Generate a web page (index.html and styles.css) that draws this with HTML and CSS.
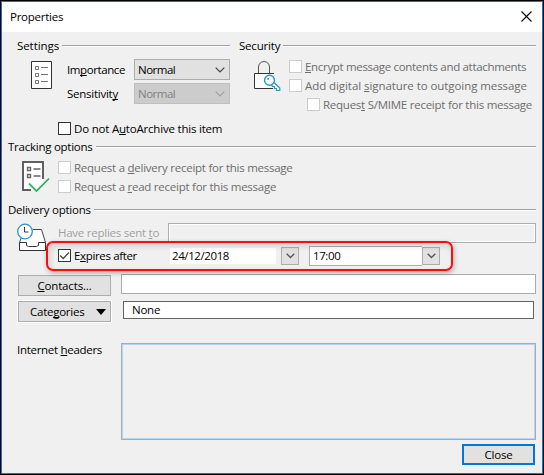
FILE: index.html
```
<!DOCTYPE html>
<html lang="en">
<head>
<meta charset="utf-8">
<title>Properties</title>
<link rel="stylesheet" href="styles.css">
</head>
<body>
<main class="dialog">
  <header class="titlebar">
    <span>Properties</span>
    <svg class="close-icon" width="11" height="11" viewBox="0 0 11 11"><path d="M.5.5l10 10M10.5.5l-10 10" fill="none" stroke="#000" stroke-width="1.1"/></svg>
  </header>

  <div class="top">
    <section class="settings">
      <h2 class="heading"><span class="t-settings">Settings</span><i class="rule"></i></h2>
      <div class="settings-body">
        <svg class="icon-list" width="21" height="28" viewBox="0 0 21 28" fill="none">
          <path d="M.5.5h20v27H.5z" fill="#fff" stroke="#333"/>
          <path d="M4.5 5.5h3v3h-3zM4.5 12.5h3v3h-3zM4.5 19.5h3v3h-3zM10 6.5h7M10 13.5h7M10 20.5h7" stroke="#737373"/>
        </svg>
        <div class="selects">
          <div class="select-row"><label class="t-importance">Im<u>p</u>ortance</label><div class="select"><span>Normal</span><svg width="10" height="6" viewBox="0 0 10 6"><path d="M.7.7L5 5 9.3.7" fill="none" stroke="#444" stroke-width="1.2"/></svg></div></div>
          <div class="select-row"><label>Sensitivit<u>y</u></label><div class="select off"><span>Normal</span><svg width="10" height="6" viewBox="0 0 10 6"><path d="M.7.7L5 5 9.3.7" fill="none" stroke="#a0a0a0" stroke-width="1.2"/></svg></div></div>
        </div>
      </div>
      <label class="check archive t-archive"><i class="box"></i><span>Do not A<u>u</u>toArchive this item</span></label>
    </section>

    <section class="security">
      <h2 class="heading"><span class="t-security">Security</span><i class="rule"></i></h2>
      <div class="security-body">
        <svg class="icon-lock" width="28" height="32" viewBox="0 0 28 32" fill="none">
          <path d="M4.500 13V7a5.500 5.500 0 0 1 11 0v6" stroke="#555"/>
          <path d="M20 13.500H.5v15H20z" fill="#fff"/>
          <path d="M20 13.500H.5v15H19" stroke="#333"/>
          <path d="M18.500 23l6 6" stroke="#f0f0f0" stroke-width="6"/>
          <path d="M19.500 22l6.300 6v2.500h-3.300v-2h-2v-2h-2l-1-2" fill="#fff" stroke="#2b93d1" stroke-width="1.200"/>
          <circle cx="15.500" cy="20.300" r="5" fill="#f8fcff" stroke="#2b93d1" stroke-width="1.400"/>
          <path d="M13.300 18h1.700v1.700h-1.700z" fill="#2b93d1"/>
        </svg>
        <div class="checks">
          <label class="check off t-encrypt"><i class="box"></i><span><u>E</u>ncrypt message contents and attachments</span></label>
          <label class="check off t-sign"><i class="box"></i><span>Add digital <u>s</u>ignature to outgoing message</span></label>
          <label class="check off nested"><i class="box"></i><span>Reques<u>t</u> S/MIME receipt for this message</span></label>
        </div>
      </div>
    </section>
  </div>

  <section class="tracking">
    <h2 class="heading"><span>Tracking options</span><i class="rule"></i></h2>
    <div class="tracking-body">
      <svg class="icon-track" width="28" height="32" viewBox="0 0 28 32" fill="none">
        <path d="M1 1h20v28H1z" fill="#fff"/>
        <path d="M21 18V1H1v28h8" stroke="#606060" stroke-width="2"/>
        <path d="M5.500 6.500h3v3h-3zM5.500 13.500h3v3h-3z" stroke="#666" stroke-width="1.400"/>
        <path d="M11.500 8h7M11.500 15h7" stroke="#666" stroke-width="1.300"/>
        <path d="M7 22.500l7.500 7.500L27 17.500" stroke="#f0f0f0" stroke-width="4"/>
        <path d="M7 22.500l7.500 7.500L27 17.500" stroke="#21b059" stroke-width="1.700"/>
      </svg>
      <div class="checks">
        <label class="check off"><i class="box"></i><span>Request a <u>d</u>elivery receipt for this message</span></label>
        <label class="check off"><i class="box"></i><span>Request a <u>r</u>ead receipt for this message</span></label>
      </div>
    </div>
  </section>

  <section class="delivery">
    <h2 class="heading"><span>Delivery options</span><i class="rule"></i></h2>
    <div class="delivery-body">
      <svg class="icon-tray" width="32" height="29" viewBox="0 0 32 29" fill="none">
        <path d="M6 5.500h18.500l4 13v8.500H2.500v-8.500z" fill="#fff"/>
        <path d="M16 5.500h8.500l4 13M4.500 13l-2 5.500" stroke="#444"/>
        <path d="M2.500 18.500h7v3l2 1h8l2-1v-3h7v8h-26z" fill="#fff" stroke="#333"/>
        <circle cx="8" cy="7.500" r="7.300" fill="#fff" stroke="#2b93d1" stroke-width="1.300"/>
        <path d="M7.500 3v5h4" stroke="#333"/>
      </svg>
      <div class="delivery-fields">
        <div class="reply"><label>Have replies sent <u>t</u>o</label><div class="reply-field"></div></div>
        <div class="expires">
          <label class="check t-expires"><i class="box"><svg width="11" height="11" viewBox="0 0 11 11"><path d="M1.200 5.500l3 3L10 2.500" fill="none" stroke="#444" stroke-width="1.300"/></svg></i><span>E<u>x</u>pires after</span></label>
          <div class="date">24/12/2018</div>
          <div class="drop"><svg width="9" height="6" viewBox="0 0 9 6"><path d="M.7.7l3.800 3.800L8.300.7" fill="none" stroke="#555" stroke-width="1.300"/></svg></div>
          <div class="time">17:00</div>
          <div class="drop joined"><svg width="9" height="6" viewBox="0 0 9 6"><path d="M.7.7l3.800 3.800L8.300.7" fill="none" stroke="#555" stroke-width="1.300"/></svg></div>
          <div class="highlight"></div>
        </div>
      </div>
    </div>
    <div class="contacts"><div class="button"><span><u>C</u>ontacts...</span></div><div class="contacts-field"></div></div>
    <div class="categories"><div class="button cat"><span>Cate<u>g</u>ories</span><svg width="10" height="6" viewBox="0 0 10 6"><path d="M0 0h10L5 6z"/></svg></div><div class="categories-field">None</div></div>
    <div class="headers"><label>Internet <u>h</u>eaders</label><div class="headers-field"></div></div>
  </section>
  <footer class="footer"><div class="close-button">Close</div></footer>
</main>
</body>
</html>
```
FILE: styles.css
```
* { box-sizing: border-box; }
body {
  margin: 0;
  background: #000;
  font: 11.5px/16px "Open Sans", "Noto Sans", sans-serif;
  letter-spacing: -0.25px;
  color: #000;
}
.dialog {
  width: 542px;
  height: 473px;
  margin: 1px;
  border: 1px solid #0f78cf;
  background: #f0f0f0;
  display: flex;
  flex-direction: column;
}
svg { display: block; flex: none; overflow: visible; }
label, span, .date, .time { white-space: nowrap; }
u { text-decoration: underline; text-decoration-thickness: 1px; text-underline-offset: 1px; text-decoration-skip-ink: none; }

.titlebar {
  height: 30px;
  flex: none;
  background: #fff;
  display: flex;
  justify-content: space-between;
  padding: 7px 10px 0 8px;
}
.close-icon { margin-top: 2px; margin-left: auto; }

.heading { margin: 0; font: inherit; height: 16px; display: flex; align-items: center; gap: 3px; }
.rule { flex: 1; height: 2px; border-top: 1px solid #a0a0a0; background: #fff; }

.top { display: flex; height: 107px; padding: 6px 6px 0 15px; gap: 9px; }
.settings { width: 213px; }
.security { flex: 1; }
.settings-body { display: flex; padding: 5px 0 0 14px; }
.icon-list { margin-top: 2px; }
.selects { margin-left: 15px; flex: 1; }
.select-row { display: flex; align-items: center; justify-content: space-between; height: 21px; margin-bottom: 3px; }
.select {
  width: 96px;
  height: 21px;
  border: 1px solid #adadad;
  background: #e1e1e1;
  display: flex;
  align-items: center;
  justify-content: space-between;
  padding: 0 4px 0 3px;
  letter-spacing: -0.5px;
}
.select.off { background: #ccc; border-color: #bfbfbf; color: #838383; }

.check { display: flex; align-items: center; height: 13px; margin-bottom: 6px; }
.check.off { color: #6d6d6d; }
.box { width: 13px; height: 13px; flex: none; border: 1px solid #333; background: #fff; margin-right: 3px; }
.check.off .box { border-color: #ccc; }
.archive { margin: 15px 0 0 41px; }

.security-body { display: flex; padding-top: 6px; }
.icon-lock { margin-left: 15px; }
.checks { margin-left: 7px; }
.nested { margin-left: 18px; }

.tracking { height: 63px; padding: 0 6px; }
.tracking-body { display: flex; padding: 6px 0 0 14px; }
.tracking .checks { margin-left: 8px; }

.delivery { padding-left: 6px; padding-right: 6px; }
.delivery-body { display: flex; padding: 5px 0 0 9px; height: 56px; }
.icon-tray { margin-top: 1px; }
.delivery-fields { margin-left: 9px; flex: 1; }
.reply { display: flex; height: 20px; justify-content: space-between; align-items: center; color: #a0a0a0; }
.reply-field { width: 368px; height: 20px; border: 1px solid #adadad; box-shadow: inset 0 0 0 1px #fff; }
.expires { position: relative; display: flex; align-items: center; height: 20px; margin-top: 3px; }
.expires .check { width: 112px; margin: 0; padding-bottom: 1px; height: 20px; }
.date { width: 106px; height: 16px; background: #fff; padding-left: 2px; line-height: 16px; margin-top: -1px; letter-spacing: -0.4px; }
.drop { width: 18px; height: 18px; border: 1px solid #adadad; background: #e1e1e1; display: flex; align-items: center; justify-content: center; margin-left: 5px; }
.time { width: 113px; height: 20px; margin-left: 10px; border: 1px solid #adadad; background: #fff; padding-left: 3px; line-height: 17px; letter-spacing: -0.4px; border-right: 0; }
.drop.joined { margin-left: 0; }
.highlight {
  position: absolute;
  left: -12px;
  top: -5px;
  width: 407px;
  height: 30px;
  border: 2px solid #f90d0d;
  border-radius: 7px;
  box-shadow: 1px 2px 5px rgba(0,0,0,.28), inset 2px 3px 6px rgba(0,0,0,.14);
}

.contacts, .categories, .headers { display: flex; padding-left: 10px; }
.contacts { height: 27px; }
.button { width: 93px; height: 21px; border: 1px solid #adadad; background: #e1e1e1; display: flex; align-items: center; justify-content: center; letter-spacing: -0.15px; }
.contacts .button { margin-top: 1px; }
.contacts-field { width: 415px; height: 20px; margin-left: 10px; border: 1px solid #ababab; background: #fff; }
.cat { justify-content: space-between; padding: 0 4px 0 11px; letter-spacing: -0.25px; box-shadow: 0 0 0 1px #fff; }
.categories-field { width: 411px; height: 18px; margin-left: 12px; border: 1px solid #646464; background: #fff; padding-left: 8px; }
.headers { margin-top: 21px; height: 97px; justify-content: space-between; }
.headers label { margin: -1px 0 0 -1px; letter-spacing: -0.29px; }
.headers-field { width: 415px; height: 97px; border: 1px solid #a4adb8; box-shadow: inset 0 0 0 1px #b3d3f0; }

.footer { display: flex; justify-content: flex-end; padding: 4px 7px 0 0; }
.close-button { width: 73px; height: 21px; border: 2px solid #0078d7; background: #e1e1e1; text-align: center; line-height: 18px; }

.t-settings { letter-spacing: -0.07px; }
.t-security, .t-archive { letter-spacing: -0.2px; }
.t-importance { letter-spacing: -0.4px; }
.t-encrypt { letter-spacing: -0.32px; }
.t-sign { letter-spacing: -0.07px; }
.t-expires { letter-spacing: -0.35px; }
```
